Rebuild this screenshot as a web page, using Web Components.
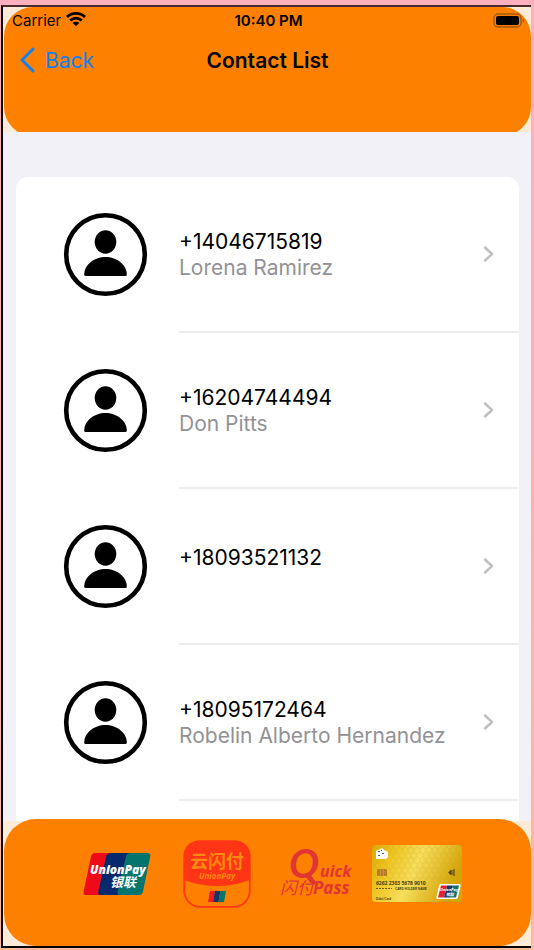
<!DOCTYPE html>
<html lang="en">
<head>
<meta charset="utf-8">
<meta name="viewport" content="width=device-width, initial-scale=1">
<title>Contact List</title>
<style>
    html, body{
        height: 100%;
        margin: 0;
    }
    body{
        box-sizing: border-box;
        padding: 5px 3px 2px 1px;
        background: linear-gradient(#ffb0be, #ffaeae 50%, #ffb99c);
        font-family: Inter, "Noto Sans CJK SC", sans-serif;
        color: #000;
    }
</style>
</head>
<body>

<phone-screen>
    <nav-header slot="top" time="10:40 PM" carrier="Carrier" back="Back">Contact List</nav-header>
    <contact-list>
        <contact-row phone="+14046715819">Lorena Ramirez</contact-row>
        <contact-row phone="+16204744494">Don Pitts</contact-row>
        <contact-row phone="+18093521132"></contact-row>
        <contact-row phone="+18095172464">Robelin Alberto Hernandez</contact-row>
        <contact-row></contact-row>
    </contact-list>
    <pay-footer slot="bottom">
        <union-pay></union-pay>
        <cloud-pass></cloud-pass>
        <quick-pass></quick-pass>
        <bank-card></bank-card>
    </pay-footer>
</phone-screen>

<template id="phone-screen">
    <style>
        :host{
            display: flex;
            flex-direction: column;
            box-sizing: border-box;
            height: 100%;
            border: 2px solid #000;
            border-top-color: #4a2a2a;
            border-right: 0;
            background: #f2f1f7;
            overflow: hidden;
        }
        main{
            flex: 1;
            min-height: 0;
            padding: 45px 12px 0 13px;
            overflow: hidden;
        }
    </style>
    <slot name="top"></slot>
    <main><slot></slot></main>
    <slot name="bottom"></slot>
</template>

<template id="nav-header">
    <style>
        :host{
            display: block;
            height: 125px;
            overflow: hidden;
            background: #fdebd8;
        }
        .panel{
            height: 129px;
            margin-left: 1px;
            border-radius: 29px;
            background: #fd8000;
        }
        .status, .bar{
            display: grid;
            grid-template-columns: 1fr auto 1fr;
            align-items: center;
        }
        .status{
            height: 26px;
            padding: 0 6px 0 8px;
            font-size: 15px;
        }
        .carrier{
            display: flex;
            align-items: center;
            gap: 5px;
        }
        .time{
            font-weight: 600;
        }
        .battery{
            justify-self: end;
        }
        .bar{
            height: 54px;
            padding: 0 16px;
            font-size: 21px;
        }
        button{
            display: flex;
            align-items: center;
            justify-self: start;
            gap: 10px;
            padding: 0;
            border: 0;
            background: none;
            color: #1080f5;
            font: inherit;
        }
        h1{
            margin: 0;
            font-size: 21px;
            font-weight: 600;
        }
        svg{
            display: block;
        }
    </style>
    <div class="panel">
        <div class="status">
            <span class="carrier"><span id="carrier"></span>
                <svg width="20" height="16" viewBox="0 0 20 16" fill="none" stroke="#000" stroke-width="2.8">
                    <path d="M1 5C6 .2 14 .2 19 5M4.300 8.500C7.600 5.300 12.400 5.300 15.700 8.500"/>
                    <path d="M10 14L6.600 10.900C8.400 9.200 11.600 9.200 13.400 10.900Z" fill="#000" stroke="none"/>
                </svg>
            </span>
            <span class="time"></span>
            <svg class="battery" width="32" height="15" viewBox="0 0 32 15">
                <rect x="1" y="1" width="27" height="13" rx="4" fill="none" stroke="#a65708" stroke-width="1.4"/>
                <rect x="3" y="3" width="23" height="9" rx="2" fill="#000"/>
                <path d="M29.6 5.3Q31.2 6 31.2 7.5T29.6 9.7Z" fill="#a65708"/>
            </svg>
        </div>
        <div class="bar">
            <button type="button">
                <svg width="15" height="26" viewBox="0 0 15 26" fill="none" stroke="currentColor" stroke-width="3" stroke-linecap="round" stroke-linejoin="round">
                    <path d="M13 2L2 13L13 24"/>
                </svg>
                <span id="back"></span>
            </button>
            <h1><slot></slot></h1>
        </div>
    </div>
</template>

<template id="contact-list">
    <style>
        :host{
            display: block;
            border-radius: 12px;
            background: #fff;
            overflow: hidden;
        }
    </style>
    <slot></slot>
</template>

<template id="contact-row">
    <style>
        :host{
            display: block;
        }
        a{
            display: flex;
            align-items: stretch;
            height: 156px;
            padding-left: 47px;
            color: inherit;
            text-decoration: none;
        }
        .avatar{
            flex: none;
            align-self: center;
            margin-right: 31px;
            padding-bottom: 2px;
        }
        .content{
            flex: 1;
            display: flex;
            align-items: center;
            justify-content: space-between;
            padding-right: 24px;
            border-bottom: 2px solid #ededef;
        }
        .text{
            padding-top: 2px;
            font-size: 21px;
            line-height: 26px;
        }
        .name{
            color: #929296;
        }
        .blank .name{
            height: 18px;
        }
    </style>
    <a href="#">
        <svg class="avatar" width="85" height="85" viewBox="0 0 85 85">
            <circle cx="42.5" cy="42.5" r="39.3" fill="none" stroke="#000" stroke-width="4.6"/>
            <ellipse cx="42.5" cy="30" rx="10.8" ry="11.7"/>
            <path d="M21.2 62.5C21.2 53 31 45 42.5 45S63.8 53 63.8 62.5Q63.8 64 62.3 64H22.7Q21.2 64 21.2 62.5Z"/>
        </svg>
        <div class="content">
            <div class="text">
                <div class="phone"></div>
                <div class="name"><slot></slot></div>
            </div>
            <svg width="14" height="18" viewBox="0 0 14 18" fill="none" stroke="#bfbfc1" stroke-width="2.4" stroke-linecap="round" stroke-linejoin="round">
                <path d="M4 2.5L11 9L4 15.5"/>
            </svg>
        </div>
    </a>
</template>

<template id="pay-footer">
    <style>
        :host{
            display: block;
            background: #fdebd8;
        }
        .panel{
            position: relative;
            display: grid;
            grid-template-columns: repeat(4, 100px);
            justify-content: center;
            align-items: center;
            box-sizing: border-box;
            height: 127px;
            margin: -2px 0 0 1px;
            padding: 0 2px 18px 0;
            border-radius: 32px;
            background: #fd8000;
        }
        ::slotted(*){
            justify-self: center;
        }
    </style>
    <div class="panel"><slot></slot></div>
</template>

<template id="union-pay">
    <style>
        :host, svg{
            display: block;
        }
    </style>
    <svg width="68" height="42" viewBox="0 0 68 42">
        <path d="M12 0H32L24 42H3Q0 42 .6 38.500L8 3.500Q9 0 12 0Z" fill="#ee0a18"/>
        <path d="M28 0H50L42 42H18Q14.500 42 15.300 38.500L23 3.500Q24 0 28 0Z" fill="#06286d"/>
        <path d="M48 0H64Q68 0 67.200 3.500L60 38.500Q59.200 42 56 42H37Q34 42 34.600 38.500L43 3.500Q44 0 48 0Z" fill="#03756c"/>
        <g fill="#fff" font-style="italic" font-weight="800">
            <text x="7" y="21" font-family="Open Sans" font-size="12">UnionPay</text>
            <text x="27" y="34" font-family="Noto Sans CJK SC" font-weight="700" font-size="13">银联</text>
        </g>
    </svg>
</template>

<template id="cloud-pass">
    <style>
        :host, svg{
            display: block;
        }
    </style>
    <svg width="68" height="68" viewBox="0 0 68 68">
        <rect x="1.200" y="1.200" width="65.600" height="65.600" rx="16" fill="none" stroke="#ff3516" stroke-width="1.800"/>
        <path d="M1 17Q1 1 17 1H51Q67 1 67 17V40Q34 52 1 40Z" fill="#ff3516"/>
        <text x="7" y="28" fill="#ff8a12" font-family="Noto Sans CJK SC" font-weight="700" font-size="18">云闪付</text>
        <text x="16" y="39" fill="#ff8a12" font-family="Open Sans" font-style="italic" font-weight="700" font-size="8">UnionPay</text>
        <path d="M27 51H32L30 62H25Z" fill="#f01d20"/>
        <path d="M32 51H37.500L35.500 62H30Z" fill="#153568"/>
        <path d="M37.500 51H43L41 62H35.500Z" fill="#0b7467"/>
    </svg>
</template>

<template id="quick-pass">
    <style>
        :host, svg{
            display: block;
        }
    </style>
    <svg width="80" height="60" viewBox="0 0 80 60" fill="#e13535" font-family="Open Sans" font-style="italic" font-weight="700">
        <text x="12" y="34" font-family="Lato" font-weight="700" font-size="40">Q</text>
        <text x="43" y="33" font-size="16">uick</text>
        <text x="3" y="50" font-family="Noto Sans CJK SC" font-weight="400" font-size="17">闪付</text>
        <text x="36" y="50" font-size="17">Pass</text>
    </svg>
</template>

<template id="bank-card">
    <style>
        :host, svg{
            display: block;
        }
    </style>
    <svg width="90" height="57" viewBox="0 0 90 57">
        <defs>
            <linearGradient id="gold" x1="0" y1="0" x2="1" y2=".3">
                <stop offset="0" stop-color="#dba906"/>
                <stop offset=".25" stop-color="#edc522"/>
                <stop offset=".55" stop-color="#f6de5c"/>
                <stop offset="1" stop-color="#d5a40a"/>
            </linearGradient>
            <pattern id="comb" width="6" height="10" patternUnits="userSpaceOnUse">
                <path d="M3 0V2L0 4V7L3 9V10M3 2L6 4V7L3 9" fill="none" stroke="#c99b12" stroke-width=".5" opacity=".4"/>
            </pattern>
        </defs>
        <rect width="90" height="57" rx="4" fill="url(#gold)"/>
        <rect width="90" height="37" rx="4" fill="url(#comb)"/>
        <path d="M4 6L8 4L10 3L12 5L16 7V12L14 14H4Z" fill="#fff"/>
        <path d="M6 6H8V7H6ZM10 8H12V9H10ZM6 10H8V11H6ZM9 5H10V6H9Z" fill="#365c78"/>
        <rect x="5" y="24" width="10" height="7" rx="1" fill="#b87d22"/>
        <path d="M8.500 24V31M11.500 24V31" stroke="#d9a552" stroke-width=".6"/>
        <path d="M77 27.500L78.500 26V29ZM80 25V30M82 24V31" fill="#5a4811" stroke="#5a4811" stroke-width="1.200"/>
        <g fill="#493c10" font-family="Liberation Sans">
            <text x="4" y="40" font-family="Open Sans" font-weight="700" font-size="5">6262 2303 5678 9010</text>
            <path d="M4 43.500H20" stroke="#6f5a16" stroke-width="1" stroke-dasharray="2 1"/>
            <text x="23" y="45" font-weight="700" font-size="3">CARD HOLDER NAME</text>
            <text x="4" y="55" font-weight="700" font-size="3">Debit Card</text>
        </g>
        <path d="M69 39H87Q89 39 88.600 41L86 52Q85.600 54 84 54H66Q64 54 64.400 52L67 41Q67.400 39 69 39Z" fill="#fff"/>
        <path d="M69 40.500H75L72 52.500H66Z" fill="#e22132"/>
        <path d="M75 40.500H81L78 52.500H72Z" fill="#17356d"/>
        <path d="M81 40.500H87L84 52.500H78Z" fill="#147268"/>
        <g fill="#fff" font-style="italic" font-weight="700">
            <text x="68" y="46" font-family="Open Sans" font-size="4">UnionPay</text>
            <text x="74" y="51" font-family="Noto Sans CJK SC" font-size="4">银联</text>
        </g>
    </svg>
</template>

<script type="text/javascript">
    class TemplateElement extends HTMLElement{

        constructor(){
            super();
            this.attachShadow({mode: 'open'});

            const template = document.querySelector(`template#${this.localName}`);
            this.shadowRoot.appendChild(template.content.cloneNode(true));
        }

        setText(selector, text){
            this.shadowRoot.querySelector(selector).textContent = text || '';
        }

    }

    class NavHeader extends TemplateElement{

        connectedCallback(){
            this.setText('#carrier', this.getAttribute('carrier'));
            this.setText('.time', this.getAttribute('time'));
            this.setText('#back', this.getAttribute('back'));
            this.onBack = this.onBack.bind(this);
            this.shadowRoot.querySelector('button').addEventListener('click', this.onBack);
        }

        disconnectedCallback(){
            this.shadowRoot.querySelector('button').removeEventListener('click', this.onBack);
        }

        onBack(){
            history.back();
        }

    }

    class ContactRow extends TemplateElement{

        connectedCallback(){
            const phone = this.getAttribute('phone');
            const link = this.shadowRoot.querySelector('a');
            this.setText('.phone', phone);
            link.classList.toggle('blank', !this.textContent.trim());
            if (phone) link.href = 'tel:' + phone;
        }

    }

    window.customElements.define("phone-screen", class extends TemplateElement{});
    window.customElements.define("nav-header", NavHeader);
    window.customElements.define("contact-list", class extends TemplateElement{});
    window.customElements.define("contact-row", ContactRow);
    window.customElements.define("pay-footer", class extends TemplateElement{});
    window.customElements.define("union-pay", class extends TemplateElement{});
    window.customElements.define("cloud-pass", class extends TemplateElement{});
    window.customElements.define("quick-pass", class extends TemplateElement{});
    window.customElements.define("bank-card", class extends TemplateElement{});
</script>

</body>
</html>
